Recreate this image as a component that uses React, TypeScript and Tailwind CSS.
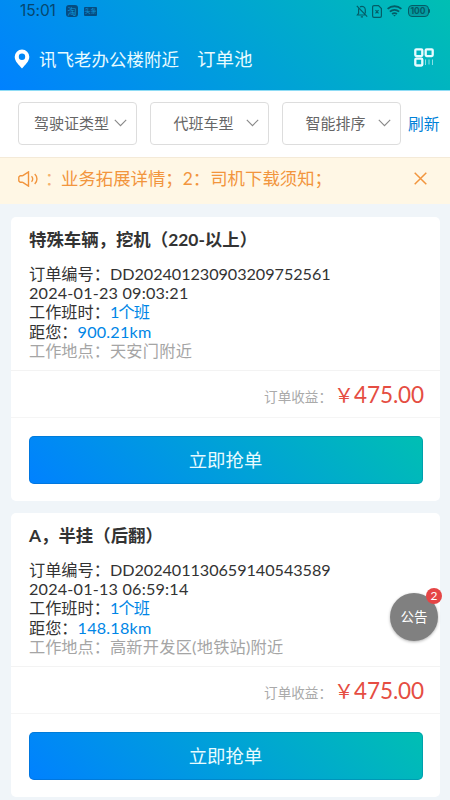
type Order = {
  id: string;
  title: string;
  time: string;
  shift: string;
  distance: string;
  place: string;
  income: string;
};

const orders: Order[] = [
  {
    id: "DD202401230903209752561",
    title: "特殊车辆，挖机（220-以上）",
    time: "2024-01-23 09:03:21",
    shift: "1个班",
    distance: "900.21km",
    place: "天安门附近",
    income: "475.00",
  },
  {
    id: "DD202401130659140543589",
    title: "A，半挂（后翻）",
    time: "2024-01-13 06:59:14",
    shift: "1个班",
    distance: "148.18km",
    place: "高新开发区(地铁站)附近",
    income: "475.00",
  },
];

const filters = ["驾驶证类型", "代班车型", "智能排序"];

function StatusBar() {
  return (
    <div className="flex h-[22px] items-center pl-[20px] pr-[20px] text-[#06476f]">
      <span className="w-[46px] font-['Inter','Noto_Sans_CJK_SC',sans-serif] text-[15.5px] leading-[22px] tracking-[-0.1px]">15:01</span>
      <span className="flex size-[12px] items-center justify-center rounded-[3px] bg-[#064c80] text-[9px] leading-none text-[#0d97dc]">淘</span>
      <span className="ml-[6px] flex h-[9px] w-[13px] items-center justify-center whitespace-nowrap rounded-[1px] bg-[#064c80] text-[6px] leading-none text-[#0d97dc]">头条</span>
      <div className="ml-auto flex items-center text-[#045c66]">
        <svg width="12" height="13" viewBox="0 0 12 13" fill="none" stroke="currentColor" strokeWidth="1.2" aria-hidden="true">
          <path d="M2.6 3.6v4.7L1.4 10h7.4M4 1.9c2.6-1.3 5.3.1 5.3 2.9v3.7M4.8 11.8h2.2M.8.8l10.4 10.8" />
        </svg>
        <svg className="ml-[4px]" width="10" height="13" viewBox="0 0 10 13" fill="none" stroke="currentColor" strokeWidth="1.2" aria-hidden="true">
          <path d="M2 .6h4.5l2.9 2.9V11A1.4 1.4 0 0 1 8 12.4H2A1.4 1.4 0 0 1 .6 11V2A1.4 1.4 0 0 1 2 .6zM3.5 5.2l3 3.2M6.5 5.2l-3 3.2" />
        </svg>
        <svg className="ml-[5px]" width="15" height="12" viewBox="0 0 15 12" fill="none" stroke="currentColor" strokeWidth="1.9" aria-hidden="true">
          <path d="M.6 3.9c4-3.5 9.8-3.5 13.8 0M2.9 6.6c2.7-2.3 6.500-2.3 9.2 0M5.1 9.1c1.5-1.2 3.3-1.2 4.8 0" />
          <path d="m6.2 10 1.3 1.5L8.8 10z" fill="currentColor" stroke="none" />
        </svg>
        <span className="ml-[6px] flex h-[12px] w-[21px] items-center justify-center rounded-[4px] border border-current bg-[#067f8c]/50 font-['Inter',sans-serif] text-[8.5px] font-bold leading-none">100</span>
        <span className="h-[4px] w-[1.5px] rounded-r bg-current" />
      </div>
    </div>
  );
}

function Header() {
  return (
    <header className="h-[91px] border-b border-[#8fdcf5] bg-[linear-gradient(45deg,#0081ff,#00bfb3)] bg-origin-border">
      <StatusBar />
      <div className="flex h-[74px] items-center pl-[14px] pr-[16px] text-[17.5px] leading-[26px] text-[#e8fbff]">
        <svg width="16" height="20" viewBox="0 0 16 20" aria-hidden="true">
          <path fill="#fff" fillRule="evenodd" d="M8 .5A7.3 7.3 0 0 0 .7 7.8C.7 12.6 5 16 8 19.5c3-3.5 7.3-6.9 7.3-11.7A7.3 7.3 0 0 0 8 .5zm0 4.1a3.2 3.2 0 1 1 0 6.4 3.2 3.2 0 0 1 0-6.4z" />
        </svg>
        <span className="ml-[9px] pt-px">讯飞老办公楼附近</span>
        <span className="ml-[18px] text-[18.5px]">订单池</span>
        <svg className="mb-[3px] ml-auto" width="20" height="19" viewBox="0 0 20 19" fill="none" stroke="currentColor" aria-hidden="true">
          <g strokeWidth="2.3">
            <rect x="1.3" y="1.3" width="7" height="6.8" rx="1" />
            <rect x="11.7" y="1.3" width="7" height="6.8" rx="1" />
            <rect x="1.3" y="10.7" width="7" height="6.8" rx="1" />
          </g>
          <path strokeWidth="1" opacity=".6" d="M11.5 11.5V17M15 11.5v5M18.5 11.5V17" />
        </svg>
      </div>
    </header>
  );
}

function FilterBar() {
  return (
    <div className="flex h-[66px] items-start bg-white pl-[18px] pt-[11px]">
      <div className="flex gap-[13px]">
        {filters.map((label) => (
          <button key={label} type="button" className="flex h-[43px] w-[119px] items-center rounded-[4px] border border-[#dddddd] pr-[9px] text-[15px] text-[#666666]">
            <span className="flex-1 whitespace-nowrap pl-[10px] text-center">{label}</span>
            <svg className="mb-[2px]" width="13" height="8" viewBox="0 0 13 8" fill="none" stroke="#888" strokeWidth="1.1" aria-hidden="true">
              <path d="m.8.8 5.7 5.800L12.2.8" />
            </svg>
          </button>
        ))}
      </div>
      <button type="button" className="ml-[7px] h-[43px] text-[15.8px] text-[#0081d8]">刷新</button>
    </div>
  );
}

function Notice() {
  return (
    <div className="flex h-[47px] items-center border-t border-[#f4ead8] bg-[#fff7e5] pb-[4px] pl-[17px] pr-[23px] text-[17.4px] text-[#f2953d]">
      <svg width="22" height="16" viewBox="0 0 22 16" fill="none" stroke="currentColor" strokeWidth="1.4" aria-hidden="true">
        <path d="M5.8 4.7 11.5.9v14.2l-5.7-3.8M5.8 4.7H3.2L1.8 6v4l1.4 1.3h2.6M14.5 5.2c1.6 1.5 1.6 4.1 0 5.6M17.7 3c3 2.6 3 7.4 0 10" />
      </svg>
      <span className="ml-[6px] w-[16px] opacity-70">：</span>
      <span className="pt-px">业务拓展详情；2：司机下载须知；</span>
      <svg className="mb-px ml-auto" width="13" height="13" viewBox="0 0 13 13" stroke="currentColor" strokeWidth="1.5" aria-hidden="true">
        <path d="m.7.7 11.6 11.6M12.3.7.7 12.3" />
      </svg>
    </div>
  );
}

function OrderCard({ order }: { order: Order }) {
  return (
    <article className="h-[284px] rounded-[5px] bg-white">
      <div className="h-[154px] border-b border-[#f3f3f3] px-[18px] pt-[10px] text-[16.2px] leading-[19.2px] text-[#333333]">
        <h2 className="mb-[11px] text-[17.4px] font-bold leading-[26px]">{order.title}</h2>
        <p>订单编号：<span className="tracking-[-0.05px]">{order.id}</span></p>
        <p className="tracking-[0.2px]">{order.time}</p>
        <p>工作班时：<span className="tracking-[-0.9px] text-[#0086e6]">{order.shift}</span></p>
        <p>距您：<span className="tracking-[0.2px] text-[#0086e6]">{order.distance}</span></p>
        <p className="text-[#a5a5a5]">工作地点：<span className="tracking-[0.25px]">{order.place}</span></p>
      </div>
      <div className="flex h-[47px] items-center justify-end border-b border-[#f5f5f5] pr-[16px]">
        <span className="pt-[6px] text-[13.6px] text-[#aaaaaa]">订单收益：</span>
        <span className="ml-[2px] flex items-center pt-[2px] text-[#e54d42]">
          <span className="text-[20px]">￥</span>
          <span className="text-[22.5px] tracking-[-0.1px]">{order.income}</span>
        </span>
      </div>
      <button type="button" className="ml-[18px] mt-[18px] h-[48px] w-[394px] rounded-[5px] bg-[linear-gradient(45deg,#0081ff,#00bfb3)] pr-[1px] pt-px text-[18.4px] text-[#e8fbff] shadow-[inset_0_0_0_1px_rgba(0,80,140,0.25)]">
        立即抢单
      </button>
    </article>
  );
}

export default function App() {
  return (
    <div className="relative h-[800px] w-[450px] overflow-hidden bg-[#f0f5f9] font-['Lato','Noto_Sans_CJK_SC',sans-serif]">
      <Header />
      <FilterBar />
      <Notice />
      <main className="flex flex-col gap-[12px] pl-[11px] pr-[10px] pt-[13px]">
        {orders.map((order) => (
          <OrderCard key={order.id} order={order} />
        ))}
      </main>
      {/* Floating announcement button */}
      <button type="button" className="absolute left-[390px] top-[593px] size-[48px] rounded-full bg-[#808080] text-[13.5px] text-white shadow-[0_1px_3px_rgba(0,0,0,0.3)]">
        公告
        <span className="absolute -right-[4px] -top-[5px] flex size-[16px] items-center justify-center rounded-full bg-[#e54545] text-[12px] leading-none">2</span>
      </button>
    </div>
  );
}
